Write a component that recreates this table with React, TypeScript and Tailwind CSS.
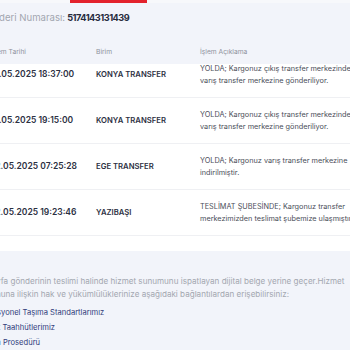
import React from "react";

type Move = {
  date: string;
  unit: string;
  lines: string[];
};

const moves: Move[] = [
  {
    date: "21.05.2025 18:37:00",
    unit: "KONYA TRANSFER",
    lines: ["YOLDA; Kargonuz çıkış transfer merkezinden", "varış transfer merkezine gönderiliyor."],
  },
  {
    date: "21.05.2025 19:15:00",
    unit: "KONYA TRANSFER",
    lines: ["YOLDA; Kargonuz çıkış transfer merkezinden", "varış transfer merkezine gönderiliyor."],
  },
  {
    date: "22.05.2025 07:25:28",
    unit: "EGE TRANSFER",
    lines: ["YOLDA; Kargonuz varış transfer merkezine", "indirilmiştir."],
  },
  {
    date: "22.05.2025 19:23:46",
    unit: "YAZIBAŞI",
    lines: ["TESLİMAT ŞUBESİNDE; Kargonuz transfer", "merkezimizden teslimat şubemize ulaşmıştır."],
  },
];

const links = ["Operasyonel Taşıma Standartlarımız", "Hizmet Taahhütlerimiz", "Tazmin Prosedürü"];

export default function App() {
  return (
    <div
      className="w-[350px] h-[350px] overflow-hidden bg-[#f2f4fa]"
      style={{ fontFamily: "Inter, 'Noto Sans', sans-serif" }}
    >
      <div className="w-[560px] -ml-[60px]">
        {/* tab strip */}
        <div className="h-[3px] bg-[#f7f8fb] pl-[130px]">
          <div className="w-[77px] h-[3px] bg-[#e3222c]" />
        </div>

        {/* order number */}
        <div className="h-[28px] pl-[6px] flex items-center mt-[1px]">
          <span className="text-[9.6px] text-[#a2a6b0]">Sipariş/Gönderi Numarası:</span>
          <span className="ml-[2px] text-[9.2px] font-bold tracking-[-0.5px] text-[#272b3d]">
            5174143131439
          </span>
        </div>

        {/* table */}
        <div className="pl-[50px]">
          <div className="h-[32px] pt-[9px] flex items-center text-[6.7px] text-[#8f939d]">
            <div className="w-[106px]">İşlem Tarihi</div>
            <div className="w-[104px]">Birim</div>
            <div>İşlem Açıklama</div>
          </div>
          <div className="bg-white h-[187px] overflow-hidden -ml-[50px] pl-[50px]">
            <div className="-mt-[12px]">
              {moves.map((m, i) => (
                <div
                  key={i}
                  className="h-[46px] flex items-center border-b-[1.5px] border-[#eff0f3]"
                >
                  <div className="w-[106px] text-[8.5px] font-semibold text-[#2c3042]">{m.date}</div>
                  <div className="w-[104px] text-[7.7px] font-semibold text-[#2c3042]">
                    {m.unit}
                  </div>
                  <div className="text-[7.3px] leading-[12px] text-[#4a4e59] whitespace-nowrap">
                    {m.lines.map((l, j) => (
                      <div key={j}>{l}</div>
                    ))}
                  </div>
                </div>
              ))}
            </div>
          </div>
        </div>

        {/* info */}
        <div className="pl-[35px] pt-[24px] text-[8.1px] leading-[13px] text-[#a3a7b0]">
          <p className="whitespace-nowrap">
            Bu sayfa gönderinin teslimi halinde hizmet sunumunu ispatlayan dijital belge yerine geçer.Hizmet
          </p>
          <p className="whitespace-nowrap">
            sunumuna ilişkin hak ve yükümlülüklerinize aşağıdaki bağlantılardan erişebilirsiniz:
          </p>
          <div className="mt-[5px] flex flex-col text-[7.6px]">
            {links.map((l) => (
              <a key={l} className="h-[15px] text-[#313c7a] whitespace-nowrap">
                {l}
              </a>
            ))}
          </div>
        </div>
      </div>
    </div>
  );
}
